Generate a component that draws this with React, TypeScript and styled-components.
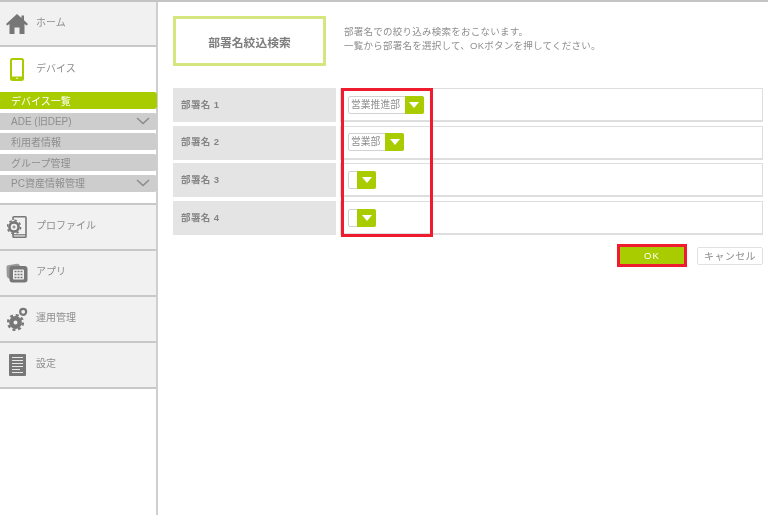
import React from "react";
import styled, { createGlobalStyle } from "styled-components";

const Global = createGlobalStyle`
  html, body { margin: 0; padding: 0; background: #fff; }
  body { font-family: "Liberation Sans", "Noto Sans CJK JP", sans-serif; color: #888; overflow: hidden; }
  * { box-sizing: border-box; }
`;

const Page = styled.div`
  width: 768px;
  height: 515px;
  display: flex;
  border-top: 2px solid #c4c4c4;
  overflow: hidden;
  filter: blur(0.35px);
`;

const Sidebar = styled.nav`
  width: 158px;
  flex: none;
  border-right: 2px solid #cfcfcf;
  display: flex;
  flex-direction: column;
`;

const NavItem = styled.div<{ $h: number }>`
  height: ${(p) => p.$h}px;
  display: flex;
  align-items: center;
  gap: 8px;
  padding-left: 6px;
  background: #f1f1f1;
  border-bottom: 2px solid #c8c8c8;
  font-size: 10px;
  color: #8e8e8e;
`;

const NavLabel = styled.span`
  margin-bottom: 4px;
`;

const IconSlot = styled.span`
  width: 22px;
  height: 26px;
  display: flex;
  align-items: center;
  justify-content: center;
  flex: none;
`;

const DeviceHead = styled.div`
  height: 45px;
  display: flex;
  align-items: center;
  gap: 8px;
  padding-left: 6px;
  font-size: 10px;
  color: #8e8e8e;
`;

const SubList = styled.div`
  display: flex;
  flex-direction: column;
  gap: 3.7px;
  margin-bottom: 11px;
`;

const SubItem = styled.div<{ $active?: boolean }>`
  height: 17px;
  width: 157px;
  padding: 0 7px 1px 11px;
  border-radius: 0 3px 3px 0;
  display: flex;
  align-items: center;
  justify-content: space-between;
  font-size: 10px;
  background: ${(p) => (p.$active ? "#a9cc00" : "#cdcdcd")};
  color: ${(p) => (p.$active ? "#fff" : "#8e8e8e")};
`;

const Group = styled.div`
  border-top: 2px solid #c8c8c8;
  display: flex;
  flex-direction: column;
`;

const Main = styled.main`
  flex: 1;
  padding: 14px 5px 0 15px;
  display: flex;
  flex-direction: column;
`;

const Header = styled.header`
  display: flex;
  align-items: center;
  gap: 18px;
  margin-bottom: 22px;
`;

const TitleBox = styled.h1`
  width: 153px;
  height: 50px;
  margin: 0;
  border: 3px solid #d6e67e;
  display: flex;
  align-items: center;
  justify-content: center;
  font-size: 11.8px;
  font-weight: 700;
  color: #7d7d7d;
`;

const Intro = styled.p`
  margin: 0 0 4px;
  font-size: 9.5px;
  line-height: 14px;
  letter-spacing: 0.25px;
  color: #8e8e8e;
`;

const Rows = styled.div`
  position: relative;
  display: flex;
  flex-direction: column;
  gap: 3.7px;
`;

const Row = styled.div`
  display: flex;
  gap: 4px;
  height: 34px;
`;

const Label = styled.div`
  width: 163px;
  background: #e4e4e4;
  padding: 0 0 3px 8px;
  display: flex;
  align-items: center;
  font-size: 9.5px;
  font-weight: 700;
  letter-spacing: 0.4px;
  color: #858585;
`;

const Value = styled.div`
  flex: 1;
  border: 1px solid #dedede;
  border-bottom-width: 2px;
  padding-left: 7px;
  display: flex;
  align-items: center;
`;

const Select = styled.div`
  display: flex;
  height: 18px;
  border: 1px solid #d2d2d2;
  border-radius: 2px;
  background: #fff;
`;

const SelectText = styled.span<{ $empty?: boolean }>`
  min-width: ${(p) => (p.$empty ? "8px" : "0")};
  padding: ${(p) => (p.$empty ? "0" : "0 5px 0 2px")};
  font-size: 9.8px;
  line-height: 16px;
  color: #8f8f8f;
`;

const SelectArrow = styled.span`
  width: 19px;
  margin: -1px -1px -1px 0;
  background: #a9cc00;
  border-radius: 0 2px 2px 0;
  display: flex;
  align-items: center;
  justify-content: center;
  &::after {
    content: "";
    border-left: 5px solid transparent;
    border-right: 5px solid transparent;
    border-top: 6px solid #fff;
  }
`;

const Highlight = styled.div`
  position: absolute;
  left: 168px;
  top: 0;
  width: 92px;
  height: 149px;
  border: 3px solid #ee1c2e;
  pointer-events: none;
`;

const Actions = styled.div`
  display: flex;
  justify-content: flex-end;
  align-items: center;
  gap: 10px;
  margin-top: 9px;
`;

const OkButton = styled.button`
  width: 70px;
  height: 23px;
  padding: 0;
  border: 3px solid #ee1c2e;
  background: #a9cc00;
  color: #fff;
  font: 9.5px "Liberation Sans", sans-serif;
  letter-spacing: 1.2px;
`;

const CancelButton = styled.button`
  width: 66px;
  height: 18px;
  padding: 0;
  border: 1px solid #e0e0e0;
  border-radius: 2px;
  background: #fff;
  color: #8c8c8c;
  font: 10px "Noto Sans CJK JP", sans-serif;
  letter-spacing: 0.4px;
`;

const Home = () => (
  <svg width="22" height="20" viewBox="0 0 22 20">
    <path d="M11 0 L0 10 L1.2 11.5 L3.5 10 V20 H8.5 V13.5 H13.5 V20 H18.5 V10 L20.8 11.5 L22 10 L18 6.2 V1.5 H15.5 V4 Z" fill="#777" />
  </svg>
);
const Phone = () => (
  <svg width="14" height="23" viewBox="0 0 14 23">
    <rect x="1" y="1" width="12" height="21" rx="1.5" fill="none" stroke="#a9cc00" strokeWidth="2" />
    <rect x="1" y="18.5" width="12" height="3.5" fill="#a9cc00" />
    <circle cx="7" cy="20.3" r="0.8" fill="#fff" />
  </svg>
);
const Profile = () => (
  <svg width="20" height="22" viewBox="0 0 20 22">
    <path d="M6 4 V1.5 Q6 0.8 6.8 0.8 H18.2 Q19 0.8 19 1.5 V20.5 Q19 21.2 18.2 21.2 H6.8 Q6 21.2 6 20.5 V17" fill="none" stroke="#777" strokeWidth="1.6" />
    <path d="M6 18.8 H19" stroke="#777" strokeWidth="1.2" />
    <circle cx="7" cy="11" r="4.6" fill="none" stroke="#777" strokeWidth="2.6" />
    <circle cx="7" cy="11" r="6.6" fill="none" stroke="#777" strokeWidth="1.6" strokeDasharray="2.6 2.6" />
    <path d="M5.5 11h3M7 9.5v3" stroke="#777" strokeWidth="1" />
  </svg>
);
const Apps = () => (
  <svg width="22" height="20" viewBox="0 0 22 20">
    <path d="M0.5 4 Q0.5 2.5 2 2.3 L11 0.8 Q12.5 0.6 13.5 2 L15 4 H4 V16 Q0.8 15 0.8 13 Z" fill="#999" />
    <rect x="3.5" y="3" width="18" height="16.5" rx="3" fill="#777" />
    <rect x="7" y="6.5" width="11" height="10" rx="1" fill="#f1f1f1" />
    <path d="M8.5 8.5h2M11.5 8.5h2M14.5 8.5h2M8.5 11.5h2M11.5 11.5h2M14.5 11.5h2M8.5 14.5h2M11.5 14.5h2M14.5 14.5h2" stroke="#777" strokeWidth="1.5" />
  </svg>
);
const Gears = () => (
  <svg width="21" height="24" viewBox="0 0 21 24">
    <circle cx="8.5" cy="15.5" r="4.2" fill="none" stroke="#777" strokeWidth="4.4" />
    <circle cx="8.5" cy="15.5" r="7.4" fill="none" stroke="#777" strokeWidth="2.4" strokeDasharray="3 2.81" />
    <circle cx="16.2" cy="4.8" r="3" fill="none" stroke="#777" strokeWidth="2.2" />
  </svg>
);
const Doc = () => (
  <svg width="17" height="22" viewBox="0 0 17 22">
    <rect width="17" height="22" rx="1" fill="#777" />
    <path d="M3 3.5h11M3 6.5h11M3 9.5h11M3 12.5h11M3 15.5h8M3 18.5h11" stroke="#e8e8e8" strokeWidth="1" />
  </svg>
);
const Chevron = () => (
  <svg width="14" height="8" viewBox="0 0 14 8">
    <path d="M1 1 L7 6.5 L13 1" fill="none" stroke="#8a8a8a" strokeWidth="1.4" />
  </svg>
);

const rows = [
  { label: "部署名 1", value: "営業推進部" },
  { label: "部署名 2", value: "営業部" },
  { label: "部署名 3", value: "" },
  { label: "部署名 4", value: "" },
];

export default function App() {
  return (
    <>
      <Global />
      <Page>
        <Sidebar>
          <NavItem $h={45}>
            <IconSlot><Home /></IconSlot><NavLabel>ホーム</NavLabel>
          </NavItem>
          <DeviceHead>
            <IconSlot><Phone /></IconSlot><NavLabel>デバイス</NavLabel>
          </DeviceHead>
          <SubList>
            <SubItem $active>デバイス一覧</SubItem>
            <SubItem>ADE (旧DEP)<Chevron /></SubItem>
            <SubItem>利用者情報</SubItem>
            <SubItem>グループ管理</SubItem>
            <SubItem>PC資産情報管理<Chevron /></SubItem>
          </SubList>
          <Group>
            <NavItem $h={46}><IconSlot><Profile /></IconSlot><NavLabel>プロファイル</NavLabel></NavItem>
            <NavItem $h={46}><IconSlot><Apps /></IconSlot><NavLabel>アプリ</NavLabel></NavItem>
            <NavItem $h={46}><IconSlot><Gears /></IconSlot><NavLabel>運用管理</NavLabel></NavItem>
            <NavItem $h={46}><IconSlot><Doc /></IconSlot><NavLabel>設定</NavLabel></NavItem>
          </Group>
        </Sidebar>
        <Main>
          <Header>
            <TitleBox>部署名絞込検索</TitleBox>
            <Intro>
              部署名での絞り込み検索をおこないます。<br />
              一覧から部署名を選択して、OKボタンを押してください。
            </Intro>
          </Header>
          <Rows>
            {rows.map((r) => (
              <Row key={r.label}>
                <Label>{r.label}</Label>
                <Value>
                  <Select>
                    <SelectText $empty={!r.value}>{r.value}</SelectText>
                    <SelectArrow />
                  </Select>
                </Value>
              </Row>
            ))}
            <Highlight />
          </Rows>
          <Actions>
            <OkButton>OK</OkButton>
            <CancelButton>キャンセル</CancelButton>
          </Actions>
        </Main>
      </Page>
    </>
  );
}
